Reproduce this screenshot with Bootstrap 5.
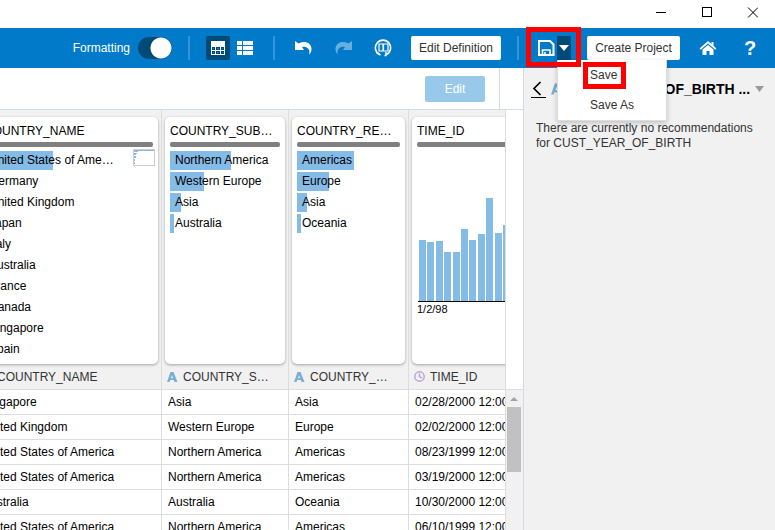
<!DOCTYPE html>
<html lang="en">
<head>
<meta charset="utf-8">
<meta name="viewport" content="width=device-width, initial-scale=1">
<title>Data Preparation</title>
<link href="https://cdn.jsdelivr.net/npm/bootstrap@5.3.0/dist/css/bootstrap.min.css" rel="stylesheet">
<style>
  body { font-family: "Liberation Sans", Arial, sans-serif; font-size: 12px; line-height: 16px; color: #000; background: #fff; }
  svg { display: block; }
  button { font-size: 12px; }
  .bare { background: none; border: 0; padding: 0; color: inherit; display: flex; align-items: center; justify-content: center; }
  .titlebar { height: 28px; }
  .titlebar .bare { width: 46px; height: 24px; }
  .toolbar { height: 40px; background: #007ac9; color: #fff; gap: 16px; padding-right: 15px; }
  .divider { width: 2px; height: 24px; background: #3395d4; }
  .tool { width: 24px; height: 24px; border-radius: 2px; }
  .tool.active, .caret-btn { background: #004a78; }
  .views { gap: 3px; }
  .format { gap: 8px; }
  .format .form-check-input { width: 34px; height: 22px; margin: 0; border: 0; box-shadow: none; background-color: #004a78; background-size: 22px 22px;
    background-image: radial-gradient(circle, #fff 0 10px, transparent 11px); border-radius: 11px; }
  .btn-plain { height: 24px; padding: 0; border: 0; border-radius: 2px; background: #fff; color: #333; font-size: 12px; line-height: 24px; }
  .w-def { width: 90px; }
  .w-create { width: 93px; }
  .save-btn { width: 22px; height: 24px; }
  .caret-btn { width: 14px; height: 24px; }
  .marker { position: absolute; border: 5px solid #f00; pointer-events: none; z-index: 1010; }
  .marker-save { left: -9px; top: -9px; width: 55px; height: 40px; }
  .marker-item { left: 25px; top: 2px; width: 43px; height: 27px; }
  .save-menu { position: absolute; left: 22px; top: 24px; width: 110px; min-width: 0; padding: 0; border: 1px solid #ddd; border-top: 0; border-radius: 0; background: #fff; box-shadow: 0 2px 5px #0003; }
  .save-menu .dropdown-item { height: 30px; padding: 0 0 0 32px; font-size: 12px; line-height: 30px; color: #333; }
  .workarea { width: 0; }
  .subbar { height: 42px; border-bottom: 1px solid #d0dbe5; }
  .subbar-main { border-right: 1px solid #d0dbe5; padding-right: 14px; }
  .subbar-end { width: 23px; }
  .btn-edit { width: 60px; height: 26px; padding: 0; border: 0; border-radius: 2px; font-size: 12px; line-height: 26px; }
  .btn-edit:disabled { background: #99c9ea; color: #fff; opacity: 1; }
  .viewport { width: 0; }
  .data-grid { table-layout: fixed; width: 560px; margin-left: -24px; border-collapse: separate; border-spacing: 0; }
  .c-name { width: 186px; } .c-sub { width: 127px; } .c-reg { width: 120px; } .c-time { width: 127px; }
  .data-grid th, .data-grid td { padding: 0; border-right: 1px solid #ddd; font-weight: 400; white-space: nowrap; overflow: hidden; }
  .data-grid thead { background: #f1f1f1; color: #333; }
  .data-grid .profiles td { padding: 7px 3px 0; vertical-align: top; overflow: visible; }
  .data-grid .names th { height: 26px; border-bottom: 1px solid #ddd; }
  .data-grid tbody td { height: 25px; padding-left: 6px; border-bottom: 1px solid #ddd; }
  .col-label { gap: 5px; padding-left: 5px; }
  .profile { height: 247px; padding: 6px 5px 0; background: #fff; color: #000; border-radius: 5px; box-shadow: 0 1px 3px #0005; position: relative; }
  .profile h2 { font-size: 12px; line-height: 16px; margin: 0 0 3px; font-weight: 400; }
  .quality { height: 5px; border-radius: 2px; background: #808080; margin-bottom: 4px; }
  .freq { list-style: none; margin: 0; padding: 0; }
  .freq li { height: 19px; line-height: 19px; margin-bottom: 2px; padding-left: 5px; background: linear-gradient(#85bbe7, #85bbe7) no-repeat 0 0 / var(--share, 0px) 100%; }
  .mini { position: absolute; right: 3px; top: 32px; width: 22px; height: 17px; }
  .chart { margin: 0; }
  .chart figcaption { font-size: 11px; line-height: 14px; }
  .gutter { width: 18px; border-left: 1px solid #ddd; }
  .gutter-head { height: 280px; border-bottom: 1px solid #ddd; }
  .track { background: #f1f1f1; padding: 0 2px 0 1px; }
  .track-up { height: 17px; }
  .thumb { height: 65px; background: #c1c1c1; }
  .advice { width: 252px; border-left: 1px solid #d0dbe5; background: #f1f1f1; }
  .advice-head { height: 42px; padding: 0 10px 0 6px; }
  .advice-head h1 { font-size: 14px; line-height: 18px; font-weight: 700; margin: 0 0 0 9px; white-space: nowrap; }
  .advice-head .kind { margin-left: 5px; }
  .advice p { margin: 0; padding: 11px 12px; line-height: 15px; color: #333; }
</style>
<script src="https://cdn.jsdelivr.net/npm/bootstrap@5.3.0/dist/js/bootstrap.bundle.min.js"></script>
</head>
<body class="d-flex flex-column vh-100 overflow-hidden">

<header class="titlebar d-flex justify-content-end flex-shrink-0">
  <button class="bare" aria-label="Minimize"><svg width="12" height="12" shape-rendering="crispEdges"><path d="M2 6.500h10" stroke="#000"/></svg></button>
  <button class="bare" aria-label="Maximize"><svg width="12" height="12" shape-rendering="crispEdges"><path d="M2.500 1.500h9v9h-9z" fill="none" stroke="#000"/></svg></button>
  <button class="bare" aria-label="Close"><svg width="12" height="12"><path d="M2 1.500l10 10M12 1.500l-10 10" stroke="#000"/></svg></button>
</header>

<nav class="toolbar d-flex align-items-center justify-content-end flex-shrink-0">
  <div class="format d-flex align-items-center form-switch p-0">
    <label for="formatting">Formatting</label>
    <input class="form-check-input" type="checkbox" role="switch" id="formatting" checked>
  </div>
  <span class="divider"></span>
  <div class="views d-flex">
    <button class="bare tool active" aria-label="Grid view"><svg width="14" height="14" fill="#fff" shape-rendering="crispEdges"><path fill-rule="evenodd" d="M0 0h14v14H0zM1 6v3h3V6zM5 6v3h4V6zM10 6v3h3V6zM1 10v3h3v-3zM5 10v3h4v-3zM10 10v3h3v-3z"/><path d="M2 7h1v1H2zM6 7h2v1H6zM11 7h1v1h-1zM2 11h1v1H2zM6 11h2v1H6zM11 11h1v1h-1z" opacity=".25"/></svg></button>
    <button class="bare tool" aria-label="List view"><svg width="16" height="14" fill="#fff"><path d="M0 0h5v4H0zM6 0h10v4H6zM0 5h5v4H0zM6 5h10v4H6zM0 10h5v4H0zM6 10h10v4H6z"/></svg></button>
  </div>
  <span class="divider"></span>
  <button class="bare tool" aria-label="Undo"><svg width="17" height="14" fill="#fff"><path d="M0 0L3.500 2.500C8-.5 16.500.5 16.500 8c0 2.500-.8 4.500-2.500 5.500.8-2.500.5-4.500-1-6C11.500 6 9.500 5.500 7 6L9 9H0z"/></svg></button>
  <button class="bare tool" aria-label="Redo"><svg width="17" height="14" fill="#66afdf"><path d="M17 0l-3.500 2.500C9-.5.5.5.5 8c0 2.500.8 4.500 2.500 5.500-.8-2.500-.5-4.500 1-6C5.500 6 7.500 5.500 10 6L8 9h9z"/></svg></button>
  <button class="bare tool" aria-label="Data actions"><svg width="18" height="18" fill="none" stroke="#fff"><path d="M5.500 15.500A7.600 7.600 0 1 1 12.500 15.500" stroke-width="1.600"/><path d="M12 13v3.500h-1.500M2.500 13.500L6.500 16" stroke-width="1.500"/><path d="M5 5h4v7H5zM9.500 5H14v7H9.500z" stroke-width="1.200"/></svg></button>
  <button class="btn-plain w-def">Edit Definition</button>
  <span class="divider"></span>
  <div class="d-flex position-relative">
    <button class="bare save-btn" aria-label="Save"><svg width="18" height="17" fill="none" stroke="#fff" stroke-width="2"><path d="M2 1h11l3.500 3.500V15H2z"/><path d="M5.500 15v-5h7.500v5" stroke-width="1.600"/><path d="M8 12v3" stroke-width="1.600"/></svg></button>
    <button class="bare caret-btn" aria-label="Save options" aria-expanded="true"><svg width="10" height="6"><path d="M0 0h10L5 6z" fill="#fff"/></svg></button>
    <div class="save-menu dropdown-menu show">
      <button class="dropdown-item">Save</button>
      <button class="dropdown-item">Save As</button>
      <span class="marker marker-item"></span>
    </div>
    <span class="marker marker-save"></span>
  </div>
  <button class="btn-plain w-create">Create Project</button>
  <button class="bare tool" aria-label="Home"><svg width="18" height="14" fill="#fff"><path d="M9 0l3.500 3V1h2v3.800L17.500 7.500l-1.200 1.200L9 2.600 1.700 8.700.5 7.500z"/><path d="M9 4l5.500 4.500V14H10.500v-4h-3v4H3.500V8.500z"/></svg></button>
  <button class="bare tool fs-5 fw-bold ps-1" aria-label="Help">?</button>
</nav>

<main class="d-flex flex-grow-1 overflow-hidden">
  <section class="workarea d-flex flex-column flex-grow-1">
    <div class="subbar d-flex flex-shrink-0">
      <div class="subbar-main d-flex flex-grow-1 align-items-center justify-content-end"><button class="btn btn-edit" disabled>Edit</button></div>
      <div class="subbar-end"></div>
    </div>
    <div class="d-flex flex-grow-1 overflow-hidden">
      <div class="viewport flex-grow-1 overflow-hidden">
        <table class="data-grid">
          <colgroup><col class="c-name"><col class="c-sub"><col class="c-reg"><col class="c-time"></colgroup>
          <thead>
            <tr class="profiles">
              <td><div class="profile"><h2>COUNTRY_NAME</h2><div class="quality"></div>
                <ul class="freq"><li style="--share:69px">United States of Ame…</li><li>Germany</li><li>United Kingdom</li><li>Japan</li><li>Italy</li><li>Australia</li><li>France</li><li>Canada</li><li>Singapore</li><li>Spain</li></ul>
                <svg class="mini" shape-rendering="crispEdges"><path d="M.5.5h21v16H.5z" fill="#fff" stroke="#ccc"/><path d="M1 1h20v1H1zM1 2h4v1H1zM1 4h3v1H1zM1 5h2v1H1zM1 7h2v2H1zM1 10h1v2H1zM1 13h1v2H1z" fill="#85bbe7"/></svg>
              </div></td>
              <td><div class="profile"><h2>COUNTRY_SUB…</h2><div class="quality"></div>
                <ul class="freq"><li style="--share:61px">Northern America</li><li style="--share:34px">Western Europe</li><li style="--share:11px">Asia</li><li style="--share:4px">Australia</li></ul></div></td>
              <td><div class="profile"><h2>COUNTRY_RE…</h2><div class="quality"></div>
                <ul class="freq"><li style="--share:57px">Americas</li><li style="--share:32px">Europe</li><li style="--share:10px">Asia</li><li style="--share:4px">Oceania</li></ul></div></td>
              <td><div class="profile"><h2>TIME_ID</h2><div class="quality"></div>
                <figure class="chart">
                  <svg width="110" height="151"><g fill="#85bbe7"><path d="M2 89h7v61H2zM10 91h7v59h-7zM19 90h7v60h-7zM27 101h7v49h-7zM36 101h7v49h-7zM44 78h7v72h-7zM52 89h7v61h-7zM61 83h7v67h-7zM69 47h7v103h-7zM78 82h7v68h-7zM86 74h7v76h-7z"/></g><path d="M1 150.500h109" stroke="#000"/></svg>
                  <figcaption>1/2/98</figcaption>
                </figure></div></td>
            </tr>
            <tr class="names">
              <th scope="col"><div class="col-label d-flex align-items-center"><svg width="11" height="10"><path d="M3.500 0h3l4 10H7.500l-.8-2H3.300l-.8 2H0zM5 3L4 6.200h2z" fill="#7aaed2"/></svg>COUNTRY_NAME</div></th>
              <th scope="col"><div class="col-label d-flex align-items-center"><svg width="11" height="10"><path d="M3.500 0h3l4 10H7.500l-.8-2H3.300l-.8 2H0zM5 3L4 6.200h2z" fill="#7aaed2"/></svg>COUNTRY_S…</div></th>
              <th scope="col"><div class="col-label d-flex align-items-center"><svg width="11" height="10"><path d="M3.500 0h3l4 10H7.500l-.8-2H3.300l-.8 2H0zM5 3L4 6.200h2z" fill="#7aaed2"/></svg>COUNTRY_…</div></th>
              <th scope="col"><div class="col-label d-flex align-items-center"><svg width="11" height="11" fill="none" stroke="#bda4dc" stroke-width="1.500"><circle cx="5.500" cy="5.500" r="4.700"/><path d="M5.500 2.500v3.200l2.500 1.500"/></svg>TIME_ID</div></th>
            </tr>
          </thead>
          <tbody>
            <tr><td>Singapore</td><td>Asia</td><td>Asia</td><td>02/28/2000 12:00:00</td></tr>
            <tr><td>United Kingdom</td><td>Western Europe</td><td>Europe</td><td>02/02/2000 12:00:00</td></tr>
            <tr><td>United States of America</td><td>Northern America</td><td>Americas</td><td>08/23/1999 12:00:00</td></tr>
            <tr><td>United States of America</td><td>Northern America</td><td>Americas</td><td>03/19/2000 12:00:00</td></tr>
            <tr><td>Australia</td><td>Australia</td><td>Oceania</td><td>10/30/2000 12:00:00</td></tr>
            <tr><td>United States of America</td><td>Northern America</td><td>Americas</td><td>06/10/1999 12:00:00</td></tr>
          </tbody>
        </table>
      </div>
      <div class="gutter d-flex flex-column flex-shrink-0 bg-white">
        <div class="gutter-head flex-shrink-0"></div>
        <div class="track flex-grow-1">
          <div class="track-up d-flex align-items-center justify-content-center"><svg width="8" height="4"><path d="M0 4h8L4 0z" fill="#a3a3a3"/></svg></div>
          <div class="thumb"></div>
        </div>
      </div>
    </div>
  </section>

  <aside class="advice flex-shrink-0">
    <div class="advice-head d-flex align-items-center">
      <button class="bare" aria-label="Back"><svg width="16" height="17" fill="none" stroke="#000"><path d="M10.500 1L4 7.500l6.500 6.500" stroke-width="1.700"/><path d="M1 16.500h15"/></svg></button>
      <svg class="kind" width="12" height="12" viewBox="0 0 11 10"><path d="M3.500 0h3l4 10H7.500l-.8-2H3.300l-.8 2H0zM5 3L4 6.200h2z" fill="#7aaed2"/></svg>
      <h1>CUST_YEAR_OF_BIRTH ...</h1>
      <button class="bare ms-auto" aria-label="Column options"><svg width="10" height="6"><path d="M0 0h9L4.500 6z" fill="#999"/></svg></button>
    </div>
    <p>There are currently no recommendations for CUST_YEAR_OF_BIRTH</p>
  </aside>
</main>
</body>
</html>
